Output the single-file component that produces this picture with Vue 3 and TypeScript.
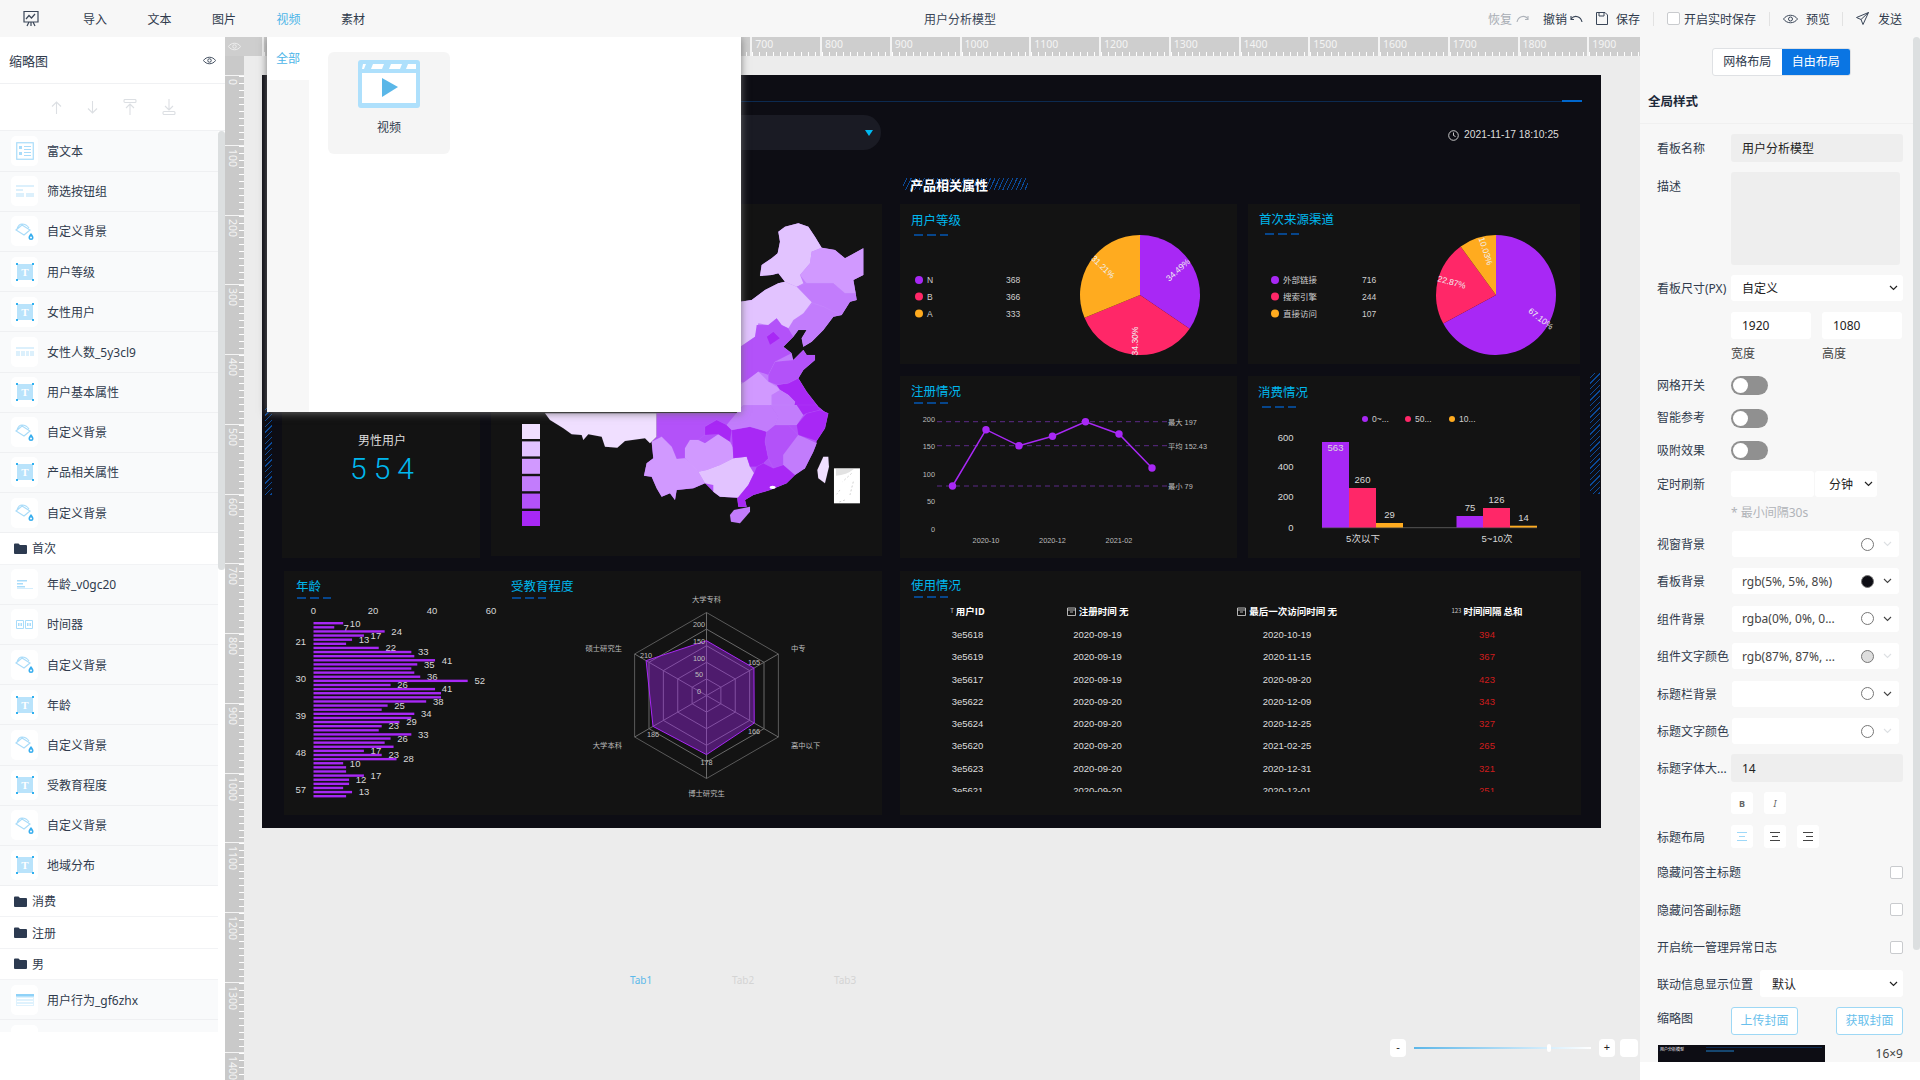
<script setup lang="ts">
const menus = ['导入', '文本', '图片', '视频', '素材']

type Row = { type: 'item' | 'folder'; name: string; icon?: string }
const rows: Row[] = [
  { type: 'item', name: '富文本', icon: 'rich' },
  { type: 'item', name: '筛选按钮组', icon: 'filter' },
  { type: 'item', name: '自定义背景', icon: 'bg' },
  { type: 'item', name: '用户等级', icon: 't' },
  { type: 'item', name: '女性用户', icon: 't' },
  { type: 'item', name: '女性人数_5y3cl9', icon: 'num' },
  { type: 'item', name: '用户基本属性', icon: 't' },
  { type: 'item', name: '自定义背景', icon: 'bg' },
  { type: 'item', name: '产品相关属性', icon: 't' },
  { type: 'item', name: '自定义背景', icon: 'bg' },
  { type: 'folder', name: '首次' },
  { type: 'item', name: '年龄_v0gc20', icon: 'bars' },
  { type: 'item', name: '时间器', icon: 'timer' },
  { type: 'item', name: '自定义背景', icon: 'bg' },
  { type: 'item', name: '年龄', icon: 't' },
  { type: 'item', name: '自定义背景', icon: 'bg' },
  { type: 'item', name: '受教育程度', icon: 't' },
  { type: 'item', name: '自定义背景', icon: 'bg' },
  { type: 'item', name: '地域分布', icon: 't' },
  { type: 'folder', name: '消费' },
  { type: 'folder', name: '注册' },
  { type: 'folder', name: '男' },
  { type: 'item', name: '用户行为_gf6zhx', icon: 'table' },
  { type: 'item', name: '', icon: 'table' },
]

const hTicks = Array.from({ length: 20 }, (_, i) => i * 100)
const vTicks = Array.from({ length: 15 }, (_, i) => i * 100)

const PURPLE = '#a828f5'
const RED = '#ff2768'
const ORANGE = '#ffab1f'

function pieSlices(cx: number, cy: number, r: number, values: number[]) {
  const colors = [PURPLE, RED, ORANGE]
  const total = values.reduce((a, b) => a + b, 0)
  let start = 0
  return values.map((v, i) => {
    const end = start + (v / total) * Math.PI * 2
    const x1 = cx + r * Math.sin(start)
    const y1 = cy - r * Math.cos(start)
    const x2 = cx + r * Math.sin(end)
    const y2 = cy - r * Math.cos(end)
    const large = end - start > Math.PI ? 1 : 0
    start = end
    return { color: colors[i], d: `M${cx} ${cy}L${x1} ${y1}A${r} ${r} 0 ${large} 1 ${x2} ${y2}Z` }
  })
}

const levelPie = pieSlices(1140, 295, 60, [34.49, 34.3, 31.21])
const sourcePie = pieSlices(1496, 295, 60, [67.1, 22.87, 10.03])

const levelLegend = [
  { name: 'N', value: 368, color: PURPLE, y: 280 },
  { name: 'B', value: 366, color: RED, y: 296.5 },
  { name: 'A', value: 333, color: ORANGE, y: 313.5 },
]
const sourceLegend = [
  { name: '外部链接', value: 716, color: PURPLE, y: 280 },
  { name: '搜索引擎', value: 244, color: RED, y: 296.5 },
  { name: '直接访问', value: 107, color: ORANGE, y: 313.5 },
]

const linePts = [
  [952.5, 486], [986, 429.7], [1019, 445.7], [1052.5, 436.3], [1085.5, 421.7], [1119, 434], [1152, 468],
]
const linePath = linePts.map((p) => p.join(',')).join(' ')
const markLines = [
  { y: 421.7, text: '最大 197' },
  { y: 445.7, text: '平均 152.43' },
  { y: 486, text: '最小 79' },
]
const lineAxis = [
  { y: 422, t: '200' }, { y: 449, t: '150' }, { y: 477, t: '100' }, { y: 504, t: '50' }, { y: 532, t: '0' },
]

const spendBars = [
  { x: 1322, top: 442, c: PURPLE, t: '563', inside: true },
  { x: 1349, top: 488, c: RED, t: '260' },
  { x: 1376, top: 523, c: ORANGE, t: '29' },
  { x: 1456.5, top: 516, c: PURPLE, t: '75' },
  { x: 1483, top: 508, c: RED, t: '126' },
  { x: 1510, top: 525.7, c: ORANGE, t: '14' },
]

const ageValues = [10, 7, 24, 17, 13, 11, 22, 33, 34, 41, 35, 33, 34, 36, 52, 26, 41, 43, 43, 38, 25, 23, 34, 33, 29, 23, 22, 33, 26, 24, 27, 17, 23, 28, 10, 11, 11, 17, 12, 12, 10, 13, 11]
const ageHidden = [5, 8, 11, 12, 17, 18, 21, 23, 26, 29, 30, 35, 36, 39, 40, 42]
const ageBars = ageValues.map((v, i) => ({
  y: 622 + i * 4.119,
  w: v * 2.965,
  v,
  label: !ageHidden.includes(i),
}))
const ageAxis = [
  { y: 645, t: '21' }, { y: 682, t: '30' }, { y: 719, t: '39' }, { y: 756, t: '48' }, { y: 793, t: '57' },
]
const ageTop = [
  { x: 313.5, t: '0' }, { x: 373, t: '20' }, { x: 432, t: '40' }, { x: 491, t: '60' },
]

const RX = 706.5
const RY = 695.5
const RR = 83
function radarPoint(i: number, value: number) {
  const a = (i * Math.PI) / 3
  const r = (value / 250) * RR
  return `${RX + r * Math.sin(a)},${RY - r * Math.cos(a)}`
}
function radarPolygon(values: number[]) {
  return values.map((v, i) => radarPoint(i, v)).join(' ')
}
const radarRings = [50, 100, 150, 200, 250].map((v) => radarPolygon(Array(6).fill(v)))
const radarValues = radarPolygon([165, 165, 166, 178, 186, 210])
const radarSpokes = [0, 1, 2, 3, 4, 5].map((i) => radarPoint(i, 250).split(','))
const radarTicks = [
  { y: 627, t: '200' }, { y: 644, t: '150' }, { y: 661, t: '100' }, { y: 677, t: '50' }, { y: 694, t: '0' },
]
const radarLabels = [
  { x: 646, y: 658, t: '210' }, { x: 754, y: 665, t: '165' }, { x: 754, y: 734, t: '166' },
  { x: 706.5, y: 765, t: '178' }, { x: 653, y: 737, t: '186' },
]
const radarNames = [
  { x: 706.5, y: 602, a: 'middle', t: '大学专科' },
  { x: 791, y: 651, a: 'start', t: '中专' },
  { x: 791, y: 748, a: 'start', t: '高中以下' },
  { x: 706.5, y: 796, a: 'middle', t: '博士研究生' },
  { x: 622, y: 748, a: 'end', t: '大学本科' },
  { x: 622, y: 651, a: 'end', t: '硕士研究生' },
]

const tableRows = [
  ['3e5618', '2020-09-19', '2020-10-19', '394'],
  ['3e5619', '2020-09-19', '2020-11-15', '367'],
  ['3e5617', '2020-09-19', '2020-09-20', '423'],
  ['3e5622', '2020-09-20', '2020-12-09', '343'],
  ['3e5624', '2020-09-20', '2020-12-25', '327'],
  ['3e5620', '2020-09-20', '2021-02-25', '265'],
  ['3e5623', '2020-09-20', '2020-12-31', '321'],
  ['3e5621', '2020-09-20', '2020-12-01', '251'],
]

const C1 = '#f0dfff'
const C2 = '#e2c3ff'
const C3 = '#d199ff'
const C4 = '#c27cfc'
const C5 = '#b352f9'
const C6 = '#a828f5'

const northBase = '130,50 150,35 190,25 220,35 240,65 260,98 300,105 330,130 385,100 385,180 355,195 362,235 365,255 345,260 320,300 295,305 265,345 230,380 205,395 200,370 215,345 190,345 175,365 145,395 170,415 175,435 205,405 215,420 240,420 240,435 205,465 190,490 215,530 250,575 280,600 16,600 16,260 50,255 90,225 130,205 150,200 130,175 110,180 75,183 80,150 110,130 128,115 135,80'
const southBase = '380,25 620,25 640,0 860,0 870,15 895,25 885,70 860,108 860,115 850,140 825,190 795,210 770,235 720,255 670,270 645,285 650,305 625,305 622,280 625,278 570,275 550,260 525,235 490,250 440,255 435,285 420,265 395,275 380,250 365,215 342,212 350,175 370,160 365,110 380,95'

const mapNorth = [
  { f: C2, p: '130,50 150,35 190,25 220,35 240,65 260,98 230,110 225,145 195,180 205,205 185,215 150,200 130,175 110,180 75,183 80,150 110,130 128,115 135,80' },
  { f: C3, p: '260,98 300,105 330,130 385,100 385,180 355,195 362,235 330,235 295,205 215,205 195,180 225,145 230,110' },
  { f: C4, p: '185,215 215,205 295,205 330,235 362,235 365,255 345,260 320,300 295,290 265,275 230,262' },
  { f: C4, p: '232,265 265,275 295,290 320,300 295,305 265,345 230,380 205,395 200,370 215,345 190,345 175,365 160,340 175,315 205,295' },
  { f: C2, p: '16,260 50,255 90,225 130,205 150,200 185,215 230,262 205,295 175,315 160,340 140,330 125,310 100,330 70,325 60,365 16,395' },
  { f: C5, p: '16,395 60,365 65,330 100,330 125,310 140,330 160,340 175,365 145,395 170,415 120,440 100,480 70,470 30,505 16,500' },
  { f: C6, p: '95,365 115,350 135,370 105,390' },
  { f: C5, p: '100,480 120,440 175,435 205,405 215,420 240,420 240,435 205,465 190,490 160,505 125,510 100,500' },
  { f: C3, p: '16,510 70,470 100,500 125,515 135,525 110,540 110,575 80,595 16,600' },
  { f: C6, p: '125,510 160,505 190,490 215,530 250,575 280,600 170,600 180,560 160,540 135,525' },
  { f: C4, p: '135,525 160,540 180,560 170,600 90,600 110,575 110,540' },
]
const mapSouth = [
  { f: C1, p: '45,25 60,45 100,70 125,88 155,90 160,105 175,88 215,95 225,125 262,128 285,108 345,100 360,115 380,95 380,25' },
  { f: C5, p: '380,25 620,25 610,50 590,60 560,45 525,65 525,90 505,105 480,105 465,130 465,160 440,162 425,125 395,95 380,95' },
  { f: C3, p: '365,110 395,95 425,125 440,162 465,160 500,190 505,200 525,235 490,250 440,255 435,285 420,265 395,275 380,250 365,215 342,212 350,175 370,160' },
  { f: C3, p: '465,160 465,130 480,105 505,105 525,115 565,88 600,110 610,130 610,160 570,180 530,195 505,200' },
  { f: C2, p: '505,200 530,195 570,180 610,160 650,155 660,185 672,205 655,240 625,278 570,275 550,260 550,240 525,235' },
  { f: C6, p: '605,75 660,65 710,80 705,110 715,160 700,175 680,185 660,185 650,155 610,160' },
  { f: C5, p: '710,80 735,60 775,60 805,90 760,150 760,180 730,190 715,160 705,110' },
  { f: C4, p: '805,90 860,115 850,140 825,190 795,210 760,180 760,150' },
  { f: C6, p: '870,15 895,25 885,70 860,108 805,90 800,60 830,25' },
  { f: C6, p: '680,185 700,175 730,190 760,180 795,210 770,235 720,255 670,270 645,285 650,305 625,305 622,280 655,240 672,205' },
  { f: C4, p: '612,315 660,305 660,320 630,355 603,350 600,330' },
  { f: C1, p: '880,155 895,155 897,185 885,235 865,220 862,195' },
  { f: C6, p: '525,65 560,45 590,60 605,75 600,110 565,88 525,90' },
  { f: C4, p: '590,60 640,0 720,0 745,35 735,60 710,80 660,65 605,75' },
  { f: C4, p: '720,0 800,0 820,30 800,60 775,60 735,60 745,35' },
  { f: C6, p: '800,0 860,0 870,15 830,25 820,30' },
]
const legendSwatches = [C1, C2, C3, C4, C5, C6]

const colorRows = [
  { label: '视窗背景', value: '', swatch: '#fff', faint: true },
  { label: '看板背景', value: 'rgb(5%, 5%, 8%)', swatch: '#0d0d14', faint: false },
  { label: '组件背景', value: 'rgba(0%, 0%, 0...', swatch: '#fff', faint: false },
  { label: '组件文字颜色', value: 'rgb(87%, 87%, ...', swatch: '#dedede', faint: true },
  { label: '标题栏背景', value: '', swatch: '#fff', faint: false },
  { label: '标题文字颜色', value: '', swatch: '#fff', faint: true },
]
const toggles = ['网格开关', '智能参考', '吸附效果']
const checks = [
  { label: '隐藏问答主标题', cls: 'check-a' },
  { label: '隐藏问答副标题', cls: 'check-b' },
  { label: '开启统一管理异常日志', cls: 'check-b' },
]
</script>

<template>
  <div class="page">
    <header class="topbar">
      <div class="top-left">
        <svg class="logo" width="16" height="17" viewBox="0 0 16 17" fill="none" stroke="#3a4658" stroke-width="1.2">
          <path d="M1 1.5h14v10.5H1zM3 9l3-3.5 2.5 2.5L12 4M4 16l2-4M12 16l-2-4M8 12v4" />
        </svg>
        <span v-for="m in menus" :key="m" class="menu" :class="{ active: m === '视频' }">{{ m }}</span>
      </div>
      <div class="top-title">用户分析模型</div>
      <div class="top-right">
        <span class="muted">恢复</span>
        <svg class="ic-redo" width="13" height="9" viewBox="0 0 13 9" fill="none" stroke="#aeb3ba" stroke-width="1.1"><path d="M1 8C2 3 8 0 12 5M12 2v3.5H9" /></svg>
        <span class="undo-txt">撤销</span>
        <svg class="ic-undo" width="13" height="9" viewBox="0 0 13 9" fill="none" stroke="#3a4658" stroke-width="1.1"><path d="M12 8C11 3 5 0 1 5M1 2v3.5h3" /></svg>
        <svg class="ic-save" width="12" height="13" viewBox="0 0 12 13" fill="none" stroke="#3a4658" stroke-width="1"><path d="M.5.5h8.5l2.5 2.5v9.500H.5zM3 .5v3.500h5V.5" /></svg>
        <span class="save-txt">保存</span>
        <i class="sep sep-a"></i>
        <i class="box"></i>
        <span class="live-txt">开启实时保存</span>
        <i class="sep sep-b"></i>
        <svg class="ic-eye" width="15" height="10" viewBox="0 0 15 10" fill="none" stroke="#3a4658" stroke-width="1"><path d="M.5 5C4 0 11 0 14.500 5 11 10 4 10 .5 5z" /><circle cx="7.500" cy="5" r="2" /></svg>
        <span class="view-txt">预览</span>
        <i class="sep sep-c"></i>
        <svg class="ic-send" width="13" height="13" viewBox="0 0 13 13" fill="none" stroke="#3a4658" stroke-width="1"><path d="M12.500.5L.5 5.500l4.500 2 2 5zM5 7.500L12.500.5" /></svg>
        <span class="send-txt">发送</span>
      </div>
    </header>

    <main class="main">
      <aside class="sidebar">
        <div class="side-head">
          <span>缩略图</span>
          <svg width="13" height="9" viewBox="0 0 15 10" fill="none" stroke="#3a4658" stroke-width="1.1"><path d="M.5 5C4 0 11 0 14.500 5 11 10 4 10 .5 5z" /><circle cx="7.500" cy="5" r="2" /></svg>
        </div>
        <div class="side-tools">
          <svg width="11" height="13" viewBox="0 0 11 13" fill="none" stroke="#dcdfe3" stroke-width="1.100"><path d="M5.500 13V1M1 5.500l4.500-4.500 4.500 4.500" /></svg>
          <svg width="11" height="13" viewBox="0 0 11 13" fill="none" stroke="#dcdfe3" stroke-width="1.100"><path d="M5.500 0v12M1 7.500l4.500 4.500 4.500-4.500" /></svg>
          <svg width="14" height="16" viewBox="0 0 14 16" fill="none" stroke="#dcdfe3" stroke-width="1.100"><rect x="1" y=".5" width="12" height="3" rx="1" /><path d="M7 16V5M3 9l4-4 4 4" /></svg>
          <svg width="14" height="16" viewBox="0 0 14 16" fill="none" stroke="#dcdfe3" stroke-width="1.100"><rect x="1" y="12.500" width="12" height="3" rx="1" /><path d="M7 0v11M3 7l4 4 4-4" /></svg>
        </div>
        <div class="side-list">
          <template v-for="(r, i) in rows" :key="i">
            <div v-if="r.type === 'folder'" class="folder">
              <svg width="13" height="11" viewBox="0 0 13 11"><path fill="#2c3a50" d="M0 1.500Q0 .5 1 .5h3.500l1.500 1.500h6q1 0 1 1v7q0 1-1 1H1q-1 0-1-1z" /></svg>
              <span>{{ r.name }}</span>
            </div>
            <div v-else class="item">
              <span class="item-icon">
                <svg v-if="r.icon === 'rich'" width="18" height="18" viewBox="0 0 18 18"><rect x=".75" y=".75" width="16.500" height="16.500" fill="#fff" stroke="#a9dcfa" stroke-width="1.200" /><path fill="#a9dcfa" d="M3 4h3v3H3zM3 10h3v3H3zM8 4h7v1H8zM8 7h7v1H8zM8 10h7v1H8zM8 13h7v1H8z" /></svg>
                <svg v-else-if="r.icon === 'filter'" width="18" height="12" viewBox="0 0 18 12"><path fill="#dcf0fc" d="M0 0h18v2H0zM0 4h7v2H0zM0 8h8v4H0zM10 8h8v4h-8z" /></svg>
                <svg v-else-if="r.icon === 'bg'" width="19" height="17" viewBox="0 0 19 17"><path fill="none" stroke="#aadcf9" stroke-width="1.200" d="M1 7l6-5 8 5-6 5zM2 6c1-3 3-5 5-5s5 1 7 4" /><path fill="#39aeee" d="M16 10c1.500 2 2.500 3 2.500 4.500a2.500 2.500 0 0 1-5 0c0-1.500 1-2.500 2.500-4.500z" /><circle cx="16" cy="14.500" r="1" fill="#fff" /></svg>
                <svg v-else-if="r.icon === 't'" width="18" height="18" viewBox="0 0 18 18"><rect x="1" y="1" width="16" height="16" fill="#b9e3fb" /><path fill="#2fb0f0" d="M0 0h2v2H0zM16 0h2v2h-2zM0 16h2v2H0zM16 16h2v2h-2z" /><text x="9" y="13" text-anchor="middle" font-size="11" font-weight="700" fill="#fff" font-family="Liberation Serif, serif">T</text></svg>
                <svg v-else-if="r.icon === 'num'" width="18" height="10" viewBox="0 0 18 10"><path fill="#dcf0fc" d="M0 0h18v2H0zM0 4h4v5H0zM5 4h4v5H5zM10 4h3v5h-3zM14 4h4v5h-4z" /></svg>
                <svg v-else-if="r.icon === 'bars'" width="16" height="9" viewBox="0 0 16 9"><path fill="#a9dcfa" d="M0 0h10v1.500H0zM0 3h6v1.500H0zM0 6h8v1.500H0zM0 8.500h16V9H0z" /></svg>
                <svg v-else-if="r.icon === 'timer'" width="17" height="9" viewBox="0 0 17 9"><path fill="none" stroke="#a9dcfa" stroke-width="1" d="M.5.500h7v8h-7zM9.500.500h7v8h-7z" /><path fill="#a9dcfa" d="M2 3h1.500v3H2zM4.500 3H6v3H4.500zM11 3h1.500v3H11zM13.500 3H15v3h-1.500z" /></svg>
                <svg v-else width="18" height="12" viewBox="0 0 18 12"><rect width="18" height="12" fill="#dff2fd" /><rect width="18" height="2.500" fill="#8fd2f8" /><path fill="#fff" d="M1 4h16v1H1zM1 7h16v1H1zM1 10h16v1H1z" /></svg>
              </span>
              <span>{{ r.name }}</span>
            </div>
          </template>
        </div>
        <i class="side-thumb"></i>
      </aside>

      <section class="workspace">
        <div class="ruler-top">
          <div class="ruler-corner">
            <svg width="13" height="9" viewBox="0 0 15 10" fill="none" stroke="#eee" stroke-width="1.100"><path d="M.5 5C4 0 11 0 14.500 5 11 10 4 10 .5 5z" /><circle cx="7.500" cy="5" r="2" /></svg>
          </div>
          <div v-for="t in hTicks" :key="t" class="h-seg">{{ t }}</div>
        </div>
        <div class="work-body">
          <div class="ruler-left">
            <div v-for="t in vTicks" :key="t" class="v-seg"><span>{{ t }}</span></div>
          </div>
          <div class="canvas">
            <div class="board">
              <i class="top-line"></i>
              <i class="top-line-end"></i>
              <div class="pill"><i class="tri"></i></div>
              <div class="clock">
                <svg width="11" height="11" viewBox="0 0 11 11" fill="none" stroke="#ddd" stroke-width=".9"><circle cx="5.500" cy="5.500" r="4.800" /><path d="M5.500 2.500v3l2 1" /></svg>
                <span>2021-11-17 18:10:25</span>
              </div>
              <div class="section-head"><span>产品相关属性</span></div>
              <i class="hatch hatch-l"></i>
              <i class="hatch hatch-r"></i>

              <div class="widget w-male">
                <div class="male-name">男性用户</div>
                <div class="male-num">554</div>
              </div>

              <div class="widget w-map">
                <svg class="fill" viewBox="491 204 391 352">
                  <rect v-for="(c, i) in legendSwatches" :key="c" x="522" :y="424 + i * 17.4" width="18" height="15" :fill="c" />
                  <g transform="translate(735 215) scale(.3333)">
                    <polygon :points="northBase" :fill="C4" />
                    <polygon v-for="(s, i) in mapNorth" :key="i" :points="s.p" :fill="s.f" stroke="#e6c8ff" stroke-width=".5" stroke-opacity=".4" />
                  </g>
                  <g transform="translate(530 405) scale(.3333)">
                    <polygon :points="southBase" :fill="C5" />
                    <polygon v-for="(s, i) in mapSouth" :key="i" :points="s.p" :fill="s.f" stroke="#e6c8ff" stroke-width=".5" stroke-opacity=".4" />
                    <ellipse cx="728" cy="247" rx="9" ry="5" fill="#fff" />
                    <rect x="912" y="190" width="78" height="105" fill="#fff" />
                    <path d="M918 212Q950 210 972 192L918 192z" fill="#e2e2e2" />
                    <path d="M965 205L938 230M930 255L920 268M970 230L960 270M945 285L925 292" stroke="#bbb" stroke-width="2" stroke-dasharray="6 6" fill="none" />
                  </g>
                </svg>
              </div>

              <div class="widget w-users">
                <div class="title">用户等级</div>
                <i class="dash"></i>
                <svg class="fill" viewBox="900 204 337 160">
                  <g v-for="l in levelLegend" :key="l.name">
                    <circle cx="919" :cy="l.y" r="4" :fill="l.color" />
                    <text x="927" :y="l.y + 3" class="lg-s">{{ l.name }}</text>
                    <text x="1006" :y="l.y + 3" class="lg-s">{{ l.value }}</text>
                  </g>
                  <path v-for="s in levelPie" :key="s.color" :d="s.d" :fill="s.color" />
                  <text class="pct" transform="translate(1180 272) rotate(-42)" text-anchor="middle">34.49%</text>
                  <text class="pct" transform="translate(1138 341) rotate(-90)" text-anchor="middle">34.30%</text>
                  <text class="pct" transform="translate(1101 269) rotate(44)" text-anchor="middle">31.21%</text>
                </svg>
              </div>

              <div class="widget w-source">
                <div class="title">首次来源渠道</div>
                <i class="dash dash-source"></i>
                <svg class="fill" viewBox="1248 204 332 160">
                  <g v-for="l in sourceLegend" :key="l.name">
                    <circle cx="1275" :cy="l.y" r="4" :fill="l.color" />
                    <text x="1283" :y="l.y + 3" class="lg-s">{{ l.name }}</text>
                    <text x="1362" :y="l.y + 3" class="lg-s">{{ l.value }}</text>
                  </g>
                  <path v-for="s in sourcePie" :key="s.color" :d="s.d" :fill="s.color" />
                  <text class="pct" transform="translate(1539 321) rotate(38)" text-anchor="middle">67.10%</text>
                  <text class="pct" transform="translate(1451 285) rotate(15)" text-anchor="middle">22.87%</text>
                  <text class="pct" transform="translate(1483 252) rotate(72)" text-anchor="middle">10.03%</text>
                </svg>
              </div>

              <div class="widget w-reg">
                <div class="title">注册情况</div>
                <i class="dash dash-tight"></i>
                <svg class="fill" viewBox="900 376 337 182">
                  <text v-for="a in lineAxis" :key="a.t" x="935" :y="a.y" class="ax" text-anchor="end">{{ a.t }}</text>
                  <g v-for="m in markLines" :key="m.text">
                    <line x1="937" x2="1167" :y1="m.y" :y2="m.y" stroke="#5d2a88" stroke-dasharray="5 4" />
                    <text x="1168" :y="m.y + 3" class="ax">{{ m.text }}</text>
                  </g>
                  <polyline :points="linePath" fill="none" :stroke="PURPLE" stroke-width="1.500" />
                  <circle v-for="p in linePts" :key="p[0]" :cx="p[0]" :cy="p[1]" r="3.700" :fill="PURPLE" />
                  <text x="986" y="543" class="ax" text-anchor="middle">2020-10</text>
                  <text x="1052.500" y="543" class="ax" text-anchor="middle">2020-12</text>
                  <text x="1119" y="543" class="ax" text-anchor="middle">2021-02</text>
                </svg>
              </div>

              <div class="widget w-spend">
                <div class="title title-spend">消费情况</div>
                <i class="dash dash-spend"></i>
                <svg class="fill" viewBox="1248 376 332 182">
                  <circle cx="1365" cy="419" r="3" :fill="PURPLE" /><text x="1372" y="422" class="lg-s">0~...</text>
                  <circle cx="1408" cy="419" r="3" :fill="RED" /><text x="1415" y="422" class="lg-s">50...</text>
                  <circle cx="1452" cy="419" r="3" :fill="ORANGE" /><text x="1459" y="422" class="lg-s">10...</text>
                  <text x="1293.500" y="441" class="lg" text-anchor="end">600</text>
                  <text x="1293.500" y="470" class="lg" text-anchor="end">400</text>
                  <text x="1293.500" y="500" class="lg" text-anchor="end">200</text>
                  <text x="1293.500" y="531" class="lg" text-anchor="end">0</text>
                  <line x1="1322" x2="1537" y1="527.700" y2="527.700" stroke="#555" />
                  <g v-for="b in spendBars" :key="b.t">
                    <rect :x="b.x" :y="b.top" width="27" :height="527.500 - b.top" :fill="b.c" />
                    <text :x="b.x + 13.500" :y="b.inside ? b.top + 9 : b.top - 5" class="lg" text-anchor="middle">{{ b.t }}</text>
                  </g>
                  <text x="1363" y="542" class="lg" text-anchor="middle">5次以下</text>
                  <text x="1497" y="542" class="lg" text-anchor="middle">5~10次</text>
                </svg>
              </div>

              <div class="widget w-ages">
                <div class="ages-heads">
                  <div class="ages-head">
                    <div class="title title-age">年龄</div>
                    <i class="dash dash-tight dash-age"></i>
                  </div>
                  <div class="ages-head">
                    <div class="title title-age">受教育程度</div>
                    <i class="dash dash-tight dash-age"></i>
                  </div>
                </div>
                <svg class="fill" viewBox="284 571 598 244">
                  <text v-for="a in ageTop" :key="a.t" :x="a.x" y="614" class="lg" text-anchor="middle">{{ a.t }}</text>
                  <text v-for="a in ageAxis" :key="a.t" x="306" :y="a.y" class="lg" text-anchor="end">{{ a.t }}</text>
                  <g v-for="b in ageBars" :key="b.y">
                    <rect x="313.500" :y="b.y" :width="b.w" height="2.400" :fill="PURPLE" />
                    <text v-if="b.label" :x="313.500 + b.w + 12" :y="b.y + 4.500" class="lg" text-anchor="middle">{{ b.v }}</text>
                  </g>
                  <polygon v-for="(r, i) in radarRings" :key="i" :points="r" fill="none" :stroke="i === 4 ? '#5a5a5a' : '#6a6a6a'" />
                  <line v-for="(s, i) in radarSpokes" :key="i" :x1="RX" :y1="RY" :x2="s[0]" :y2="s[1]" stroke="#6a6a6a" />
                  <polygon :points="radarValues" fill="rgba(168,40,245,.4)" :stroke="PURPLE" />
                  <text v-for="t in radarTicks" :key="t.t" x="699" :y="t.y" class="ax" text-anchor="middle">{{ t.t }}</text>
                  <text v-for="t in radarLabels" :key="t.t" :x="t.x" :y="t.y" class="ax" text-anchor="middle">{{ t.t }}</text>
                  <text v-for="t in radarNames" :key="t.t" :x="t.x" :y="t.y" class="ax" :text-anchor="t.a">{{ t.t }}</text>
                </svg>
              </div>

              <div class="widget w-usage">
                <div class="title title-usage">使用情况</div>
                <i class="dash dash-tight"></i>
                <div class="table">
                  <div class="t-row t-head">
                    <span><small class="tag">T</small>用户ID</span>
                    <span>
                      <svg width="9" height="9" viewBox="0 0 9 9" fill="none" stroke="#ddd" stroke-width=".8"><path d="M.5 1h8v7.500h-8zM.5 3h8M3 5h3" /></svg>
                      注册时间 无
                    </span>
                    <span>
                      <svg width="9" height="9" viewBox="0 0 9 9" fill="none" stroke="#ddd" stroke-width=".8"><path d="M.5 1h8v7.500h-8zM.5 3h8M3 5h3" /></svg>
                      最后一次访问时间 无
                    </span>
                    <span><small class="tag">123</small>时间间隔 总和</span>
                  </div>
                  <div v-for="r in tableRows" :key="r[0]" class="t-row">
                    <span>{{ r[0] }}</span>
                    <span>{{ r[1] }}</span>
                    <span>{{ r[2] }}</span>
                    <span class="t-red">{{ r[3] }}</span>
                  </div>
                </div>
              </div>
            </div>
            <div class="tabs">
              <span class="tab-on">Tab1</span>
              <span>Tab2</span>
              <span>Tab3</span>
            </div>
          </div>
        </div>
        <div class="zoom-bar">
          <span class="zoom-btn">-</span>
          <div class="slider"><i></i></div>
          <span class="zoom-btn">+</span>
          <span class="zoom-btn zoom-blank"></span>
        </div>
      </section>

      <aside class="panel-wrap">
        <div class="panel">
          <div class="seg">
            <span>网格布局</span>
            <span class="seg-on">自由布局</span>
          </div>
          <div class="panel-title">全局样式</div>
          <div class="form">
            <div class="row r-name"><label>看板名称</label><div class="ctl grey name-val">用户分析模型</div></div>
            <div class="row r-desc"><label>描述</label><div class="ctl grey desc-box"></div></div>
            <div class="row r-size">
              <label>看板尺寸(PX)</label>
              <div class="ctl white between">自定义
                <svg class="chev" width="9" height="6" viewBox="0 0 9 6" fill="none" stroke="#222" stroke-width="1.200"><path d="M1 1l3.500 3.500L8 1" /></svg>
              </div>
            </div>
            <div class="row r-wh"><label></label><div class="ctl white wh">1920</div><div class="ctl white wh wh2">1080</div></div>
            <div class="row r-whl"><label></label><span class="wh-label">宽度</span><span class="wh-label">高度</span></div>
            <div v-for="(t, i) in toggles" :key="t" class="row r-toggle" :class="{ first: i === 0 }">
              <label>{{ t }}</label><i class="toggle"></i>
            </div>
            <div class="row r-interval">
              <label>定时刷新</label>
              <div class="ctl white int-input"></div>
              <div class="ctl white int-unit between">分钟
                <svg class="chev" width="9" height="6" viewBox="0 0 9 6" fill="none" stroke="#222" stroke-width="1.200"><path d="M1 1l3.500 3.500L8 1" /></svg>
              </div>
            </div>
            <div class="row r-hint"><label></label><span>* 最小间隔30s</span></div>
            <div v-for="c in colorRows" :key="c.label" class="row r-color">
              <label>{{ c.label }}</label>
              <div class="ctl white color-box">
                <span class="color-val">{{ c.value }}</span>
                <i class="swatch" :style="{ background: c.swatch }"></i>
                <svg width="9" height="6" viewBox="0 0 9 6" fill="none" :stroke="c.faint ? '#dde0e3' : '#444'" stroke-width="1.100"><path d="M1 1l3.500 3.500L8 1" /></svg>
              </div>
            </div>
            <div class="row r-font"><label class="cut">标题字体大...</label><div class="ctl grey font-val">14</div></div>
            <div class="row r-bi">
              <label></label>
              <span class="sq"><b>B</b></span>
              <span class="sq"><em>I</em></span>
            </div>
            <div class="row r-align">
              <label>标题布局</label>
              <span class="sq">
                <svg width="10" height="9" viewBox="0 0 10 9" stroke="#9ed8f8"><path d="M0 .5h10M2 4.500h6M0 8.500h10" /></svg>
              </span>
              <span class="sq">
                <svg width="10" height="9" viewBox="0 0 10 9" stroke="#444"><path d="M0 .5h10M2 4.500h6M0 8.500h10" /></svg>
              </span>
              <span class="sq">
                <svg width="10" height="9" viewBox="0 0 10 9" stroke="#444"><path d="M0 .5h10M3 4.500h7M0 8.500h10" /></svg>
              </span>
            </div>
            <div v-for="c in checks" :key="c.label" class="row r-check" :class="c.cls">
              <span>{{ c.label }}</span><i class="box"></i>
            </div>
            <div class="row r-link">
              <span class="link-label">联动信息显示位置</span>
              <div class="ctl white link-val between">默认
                <svg class="chev" width="9" height="6" viewBox="0 0 9 6" fill="none" stroke="#222" stroke-width="1.200"><path d="M1 1l3.500 3.500L8 1" /></svg>
              </div>
            </div>
            <div class="row r-btns">
              <label>缩略图</label>
              <span class="btn">上传封面</span>
              <span class="btn btn-r">获取封面</span>
            </div>
            <div class="row r-thumb">
              <div class="thumb">
                <span>用户分析模型</span>
                <i class="thumb-line"></i>
                <i class="thumb-pill"></i>
              </div>
              <span class="ratio">16×9</span>
            </div>
          </div>
        </div>
        <i class="panel-scroll"></i>
      </aside>

      <div class="popup">
        <div class="pop-tabs"><span>全部</span></div>
        <div class="pop-body">
          <div class="pop-card">
            <svg width="62" height="48" viewBox="0 0 62 48">
              <rect width="62" height="48" rx="3" fill="#aee0fc" />
              <rect x="4" y="13" width="54" height="30" fill="#fff" />
              <path fill="#fff" d="M5 4h3l-2 5H4zM15 4h11l-2 5H13zM33 4h11l-2 5H31zM50 4h8v5H48z" />
              <path fill="#5ab7e8" d="M24 18l16 9-16 10z" />
            </svg>
            <span>视频</span>
          </div>
        </div>
      </div>
    </main>
  </div>
</template>

<style scoped>
.page {
  width: 1920px;
  height: 1080px;
  overflow: hidden;
  display: flex;
  flex-direction: column;
  font-family: 'Noto Sans', 'Noto Sans CJK SC', sans-serif;
  font-size: 12px;
  color: #303b4d;
  background: #fff;
}

/* top bar */
.topbar {
  position: relative;
  z-index: 2;
  height: 37px;
  flex: none;
  display: grid;
  grid-template-columns: 1fr auto 1fr;
  align-items: center;
  background: #f7f7f7;
}
.top-left {
  display: flex;
  align-items: center;
  padding-left: 23px;
}
.logo {
  margin-right: 44px;
}
.menu {
  width: 24px;
  margin-right: 40.500px;
}
.menu.active {
  color: #4db5e8;
}
.top-title {
  color: #3a4658;
}
.top-right {
  display: flex;
  align-items: center;
  justify-content: flex-end;
  padding-right: 18px;
}
.muted {
  color: #a8adb4;
}
.ic-redo {
  margin-left: 4px;
}
.undo-txt {
  margin-left: 14px;
}
.ic-undo {
  margin-left: 3px;
}
.ic-save {
  margin-left: 13px;
}
.save-txt {
  margin-left: 8px;
}
.sep {
  width: 1px;
  height: 14px;
  background: #e2e2e2;
}
.sep-a {
  margin-left: 13px;
}
.box {
  width: 13px;
  height: 13px;
  box-sizing: border-box;
  background: #fff;
  border: 1px solid #c9cbce;
  border-radius: 2px;
}
.sep-a + .box {
  margin-left: 13px;
}
.live-txt {
  margin-left: 4px;
}
.sep-b {
  margin-left: 13px;
}
.ic-eye {
  margin-left: 13px;
}
.view-txt {
  margin-left: 8px;
}
.sep-c {
  margin-left: 12px;
}
.ic-send {
  margin-left: 13px;
}
.send-txt {
  margin-left: 9px;
}

/* main */
.main {
  position: relative;
  flex: 1;
  display: flex;
  min-height: 0;
}

/* left sidebar */
.sidebar {
  position: relative;
  width: 225px;
  flex: none;
  background: #fff;
}
.side-head {
  height: 47px;
  box-sizing: border-box;
  border-bottom: 1px solid #f0f1f3;
  padding: 0 9px;
  display: flex;
  align-items: center;
  justify-content: space-between;
  font-size: 13px;
}
.side-tools {
  height: 47px;
  box-sizing: border-box;
  border-bottom: 1px solid #f0f1f3;
  padding-left: 51px;
  display: flex;
  align-items: center;
  gap: 25px;
}
.side-list {
  width: 218px;
  height: 901px;
  padding-top: 0.400px;
  box-sizing: border-box;
  overflow: hidden;
}
.item {
  height: 40.200px;
  box-sizing: border-box;
  display: flex;
  align-items: center;
  gap: 9px;
  padding-left: 11px;
  background: #f9fafb;
  border-bottom: 1px solid #eff0f2;
}
.item-icon {
  width: 27px;
  height: 30px;
  border-radius: 5px;
  background: #fff;
  display: flex;
  align-items: center;
  justify-content: center;
}
.folder {
  height: 31.300px;
  box-sizing: border-box;
  display: flex;
  align-items: center;
  gap: 5px;
  padding-left: 14px;
  background: #fff;
  border-bottom: 1px solid #f2f3f5;
}
.side-thumb {
  position: absolute;
  left: 218px;
  top: 94px;
  width: 7px;
  height: 439px;
  border-radius: 4px;
  background: #dcdfe0;
}

/* workspace */
.workspace {
  position: relative;
  flex: 1;
  min-width: 0;
  display: flex;
  flex-direction: column;
  background: #ececec;
  overflow: hidden;
}
.ruler-top {
  height: 19px;
  flex: none;
  display: flex;
  background: #cecece;
}
.ruler-corner {
  width: 37px;
  flex: none;
  padding-left: 3px;
  box-sizing: border-box;
  display: flex;
  align-items: center;
}
.h-seg {
  width: 69.750px;
  flex: none;
  box-sizing: border-box;
  border-left: 2px solid #f4f4f4;
  padding-left: 3px;
  font-size: 10.500px;
  line-height: 15px;
  color: #f4f4f4;
  background: repeating-linear-gradient(90deg, #fff 0 1px, transparent 1px 7px) bottom / 100% 4px no-repeat;
}
.work-body {
  flex: 1;
  min-height: 0;
  display: flex;
}
.ruler-left {
  width: 19px;
  flex: none;
  padding-top: 19px;
  background: #c9c9c9;
  overflow: hidden;
}
.v-seg {
  height: 69.750px;
  box-sizing: border-box;
  border-top: 1px solid #f4f4f4;
  padding: 3px 0 0 2px;
  color: #f4f4f4;
  font-size: 10.500px;
  background: repeating-linear-gradient(180deg, #fff 0 1px, transparent 1px 7px) right / 5px 100% no-repeat;
}
.v-seg span {
  display: block;
  writing-mode: vertical-rl;
  line-height: 12px;
}
.canvas {
  flex: 1;
  min-width: 0;
  padding: 19px 0 0 18px;
}

/* board: widgets sit on a free layout canvas */
.board {
  position: relative;
  width: 1339px;
  height: 753px;
  background: #0d0d14;
  font-family: 'Liberation Sans', 'Noto Sans CJK SC', sans-serif;
}
.top-line {
  position: absolute;
  left: 300px;
  right: 19px;
  top: 26px;
  height: 1px;
  background: #0c2a50;
}
.top-line-end {
  position: absolute;
  right: 19px;
  top: 25px;
  width: 20px;
  height: 2px;
  background: #0066cc;
}
.pill {
  position: absolute;
  left: 400px;
  top: 40px;
  width: 219px;
  height: 35px;
  border-radius: 18px;
  background: #1a1b24;
}
.tri {
  position: absolute;
  right: 8px;
  top: 15px;
  border: 4px solid transparent;
  border-top: 6px solid #00b7ee;
  border-bottom: 0;
}
.clock {
  position: absolute;
  left: 1186px;
  top: 54px;
  display: flex;
  align-items: center;
  gap: 5px;
  font-size: 10.300px;
  line-height: 12px;
  color: #ddd;
}
.section-head {
  position: absolute;
  left: 641px;
  top: 103px;
  width: 125px;
  height: 12px;
  background: repeating-linear-gradient(115deg, transparent 0 3px, #0a4a9a 3px 4px);
  color: #fff;
  font-size: 13px;
  font-weight: 700;
  line-height: 14px;
  padding-left: 7px;
  box-sizing: border-box;
  font-family: 'Noto Sans CJK SC', sans-serif;
}
.hatch {
  position: absolute;
  background: repeating-linear-gradient(135deg, transparent 0 3px, #0a4a9a 3px 4px);
}
.hatch-l {
  left: 3px;
  top: 330px;
  width: 7px;
  height: 90px;
}
.hatch-r {
  left: 1328px;
  top: 298px;
  width: 10px;
  height: 121px;
}
.widget {
  position: absolute;
  background: #131313;
  overflow: hidden;
}
.fill {
  position: absolute;
  inset: 0;
  width: 100%;
  height: 100%;
  font-family: 'Liberation Sans', 'Noto Sans CJK SC', sans-serif;
}
.w-male {
  left: 20px;
  top: 129px;
  width: 198px;
  height: 354px;
  padding-left: 2px;
  box-sizing: border-box;
  text-align: center;
}
.male-name {
  margin-top: 229px;
  color: #ddd;
  font-size: 12px;
  line-height: 16px;
}
.male-num {
  margin-top: 2px;
  color: #00b7ee;
  font-family: Roboto, sans-serif;
  font-weight: 300;
  font-size: 30px;
  line-height: 36px;
  letter-spacing: 7px;
  padding-left: 7px;
}
.w-map {
  left: 229px;
  top: 129px;
  width: 391px;
  height: 352px;
}
.w-users {
  left: 638px;
  top: 129px;
  width: 337px;
  height: 160px;
}
.w-source {
  left: 986px;
  top: 129px;
  width: 332px;
  height: 160px;
}
.w-reg {
  left: 638px;
  top: 301px;
  width: 337px;
  height: 182px;
}
.w-spend {
  left: 986px;
  top: 301px;
  width: 332px;
  height: 182px;
}
.w-ages {
  left: 22px;
  top: 496px;
  width: 598px;
  height: 244px;
}
.w-usage {
  left: 638px;
  top: 496px;
  width: 681px;
  height: 244px;
}
.title {
  margin: 7px 0 0 11px;
  color: #00b7ee;
  font-size: 12.500px;
  line-height: 18px;
  font-family: 'Noto Sans CJK SC', sans-serif;
}
.w-source .title,
.w-reg .title {
  margin-top: 6px;
}
.title-spend {
  margin: 7px 0 0 10px;
}
.title-usage {
  margin-top: 5px;
}
.dash {
  display: block;
  width: 34px;
  height: 2px;
  margin: 5px 0 0 14px;
  background: repeating-linear-gradient(90deg, #07468c 0 9px, transparent 9px 13px);
}
.dash-source {
  margin: 5px 0 0 17px;
}
.dash-tight {
  margin-top: 2px;
}
.dash-spend {
  margin: 5px 0 0 14px;
}
.ages-heads {
  position: relative;
  z-index: 1;
  display: flex;
}
.ages-head {
  width: 215px;
}
.title-age {
  margin: 6px 0 0 12px;
}
.dash-age {
  margin-left: 13px;
}
.lg {
  font-size: 9.500px;
  fill: #d8d8d8;
}
.lg-s {
  font-size: 8.500px;
  fill: #d0d0d0;
}
.ax {
  font-size: 7.300px;
  fill: #bdbdbd;
}
.pct {
  font-size: 8.500px;
  fill: #f0f0f0;
}
.table {
  margin-top: 2px;
  height: 192px;
  overflow: hidden;
  font-size: 9.500px;
  color: #ddd;
}
.t-row {
  display: grid;
  grid-template-columns: 135px 125px 254px 146px;
  height: 22.300px;
  line-height: 22.300px;
  text-align: center;
}
.t-head {
  height: 24px;
  line-height: 22px;
  color: #fff;
  font-weight: 700;
  font-family: 'Noto Sans CJK SC', sans-serif;
}
.t-head svg {
  vertical-align: -1px;
  margin-right: 1px;
}
.tag {
  font-size: 6px;
  font-weight: 400;
  color: #ccc;
  margin-right: 2px;
  vertical-align: 2px;
}
.t-red {
  color: #cf1d1d;
}
.tabs {
  display: flex;
  margin: 144.500px 0 0 328px;
  font-size: 10px;
  color: #d4d4d4;
}
.tabs span {
  width: 102px;
  text-align: center;
}
.tabs .tab-on {
  color: #5cb9ea;
}
.zoom-bar {
  position: absolute;
  right: 2px;
  bottom: 23px;
  display: flex;
  align-items: center;
}
.zoom-btn {
  width: 16px;
  height: 18px;
  border-radius: 4px;
  background: #fff;
  text-align: center;
  line-height: 16px;
  color: #222;
  font-size: 11px;
}
.zoom-blank {
  width: 18px;
  margin-left: 5px;
}
.slider {
  position: relative;
  width: 177px;
  height: 2px;
  margin: 0 8px;
  background: linear-gradient(90deg, #5cb6e8, #d5edfb 75%, #fff);
}
.slider i {
  position: absolute;
  left: 133px;
  top: -3px;
  width: 4px;
  height: 8px;
  border-radius: 2px;
  background: #fff;
}

/* right panel */
.panel-wrap {
  position: relative;
  width: 280px;
  flex: none;
  background: #fff;
}
.panel {
  height: 1025px;
  overflow: hidden;
  background: #f7f7f7;
}
.panel-scroll {
  position: absolute;
  right: 0;
  top: 0;
  width: 7px;
  height: 913px;
  border-radius: 4px;
  background: #dcdfe0;
}
.seg {
  display: inline-flex;
  margin: 11px 0 0 72px;
  height: 28px;
  box-sizing: border-box;
  border: 1px solid #dfe1e4;
  border-radius: 3px;
  background: #fff;
  overflow: hidden;
}
.seg span {
  width: 68.500px;
  text-align: center;
  line-height: 26px;
}
.seg .seg-on {
  background: #0a75e3;
  color: #fff;
}
.panel-title {
  height: 48px;
  box-sizing: border-box;
  border-bottom: 1px solid #f0f0f0;
  padding-left: 8px;
  font-size: 12.500px;
  font-weight: 700;
  line-height: 50px;
  color: #1e2a3a;
  font-family: 'Noto Sans CJK SC', sans-serif;
}
.form {
  padding-left: 17px;
  width: 246px;
}
.row {
  display: flex;
  align-items: center;
}
.row label {
  width: 74px;
  flex: none;
}
.r-toggle label {
  margin-bottom: 2px;
}
.ctl {
  box-sizing: border-box;
  padding-left: 11px;
  color: #222;
  border-radius: 3px;
  display: flex;
  align-items: center;
}
.grey {
  background: #eee;
}
.white {
  background: #fff;
}
.between {
  justify-content: space-between;
  padding-right: 5px;
}
.r-name {
  height: 28px;
  margin-top: 10px;
}
.name-val {
  width: 172px;
  height: 28px;
}
.r-desc {
  height: 93px;
  margin-top: 10px;
  align-items: flex-start;
}
.r-desc label {
  line-height: 30px;
}
.desc-box {
  width: 169px;
  height: 93px;
}
.r-size {
  height: 26px;
  margin-top: 10px;
}
.r-size .ctl {
  width: 172px;
  height: 26px;
}
.r-wh {
  height: 27px;
  margin-top: 11px;
}
.wh {
  width: 80px;
  height: 27px;
}
.wh2 {
  margin-left: 11px;
}
.r-whl {
  height: 16px;
  margin-top: 6px;
  color: #444;
}
.wh-label {
  width: 91px;
  flex: none;
}
.r-toggle {
  height: 19px;
  margin-top: 13.600px;
}
.r-toggle.first {
  margin-top: 15px;
}
.toggle {
  position: relative;
  width: 37px;
  height: 19px;
  border-radius: 10px;
  background: #909090;
}
.toggle::after {
  content: '';
  position: absolute;
  left: 2px;
  top: 2px;
  width: 15px;
  height: 15px;
  border-radius: 50%;
  background: #fff;
}
.r-interval {
  height: 26px;
  margin-top: 10.500px;
}
.int-input {
  width: 83px;
  height: 26px;
}
.int-unit {
  width: 62px;
  height: 26px;
  margin-left: 1px;
  padding-left: 14px;
  padding-right: 4px;
}
.r-hint {
  height: 16px;
  margin-top: 7px;
  color: #b0b3b8;
}
.r-color {
  height: 26px;
  margin-top: 11.400px;
}
.color-box {
  width: 167px;
  height: 26px;
  margin-left: 1px;
  padding-left: 10px;
  padding-right: 7px;
}
.color-val {
  flex: 1;
  color: #444;
  white-space: nowrap;
}
.swatch {
  width: 11px;
  height: 11px;
  border: 1px solid #777;
  border-radius: 50%;
  margin-right: 9px;
}
.r-font {
  height: 28px;
  margin-top: 10px;
}
.cut {
  white-space: nowrap;
}
.font-val {
  width: 172px;
  height: 28px;
}
.r-bi {
  height: 22px;
  margin-top: 10px;
}
.r-align {
  height: 23px;
  margin-top: 11px;
}
.sq {
  width: 22px;
  height: 100%;
  margin-right: 11px;
  border-radius: 3px;
  background: #fff;
  display: flex;
  align-items: center;
  justify-content: center;
  color: #666;
  font-size: 9px;
}
.r-check {
  height: 20px;
  justify-content: space-between;
}
.check-a {
  margin-top: 14px;
}
.check-b {
  margin-top: 17.500px;
}
.r-link {
  height: 27px;
  margin-top: 13px;
}
.link-label {
  width: 103px;
  flex: none;
}
.link-val {
  width: 143px;
  height: 27px;
  padding-left: 12px;
}
.r-btns {
  height: 28px;
  margin-top: 10px;
  align-items: flex-start;
}
.r-btns label {
  margin-top: 2px;
}
.btn {
  width: 67px;
  height: 28px;
  box-sizing: border-box;
  border: 1px solid #9ed8f5;
  border-radius: 3px;
  background: #fff;
  color: #69bfec;
  text-align: center;
  line-height: 26px;
}
.btn-r {
  margin-left: 38px;
}
.r-thumb {
  margin: 10px 0 0 1px;
  height: 15px;
  justify-content: space-between;
  align-items: flex-start;
}
.thumb {
  position: relative;
  width: 167px;
  height: 30px;
  background: #0d0d14;
  color: #fff;
  font-size: 4px;
  line-height: 10px;
  padding-left: 2px;
  box-sizing: border-box;
}
.thumb-line {
  position: absolute;
  left: 48px;
  top: 2px;
  width: 116px;
  height: 1px;
  background: #0c2a50;
}
.thumb-pill {
  position: absolute;
  left: 48px;
  top: 5px;
  width: 28px;
  height: 2px;
  background: #16466f;
}
.ratio {
  color: #444;
  line-height: 18px;
}

/* media picker over the canvas */
.popup {
  position: absolute;
  left: 267px;
  top: 0;
  width: 474px;
  height: 375px;
  display: flex;
  background: #fff;
  box-shadow: 0 1px 8px rgba(110, 110, 110, 0.9);
}
.pop-tabs {
  width: 42px;
  flex: none;
  background: #f7f7f7;
}
.pop-tabs span {
  display: block;
  height: 43px;
  background: #fff;
  color: #4db5e8;
  text-align: center;
  line-height: 43px;
}
.pop-body {
  padding: 15px 0 0 19px;
}
.pop-card {
  width: 122px;
  height: 102px;
  border-radius: 6px;
  background: #f5f5f5;
  display: flex;
  flex-direction: column;
  align-items: center;
  padding-top: 8px;
  box-sizing: border-box;
  gap: 10px;
}
</style>
